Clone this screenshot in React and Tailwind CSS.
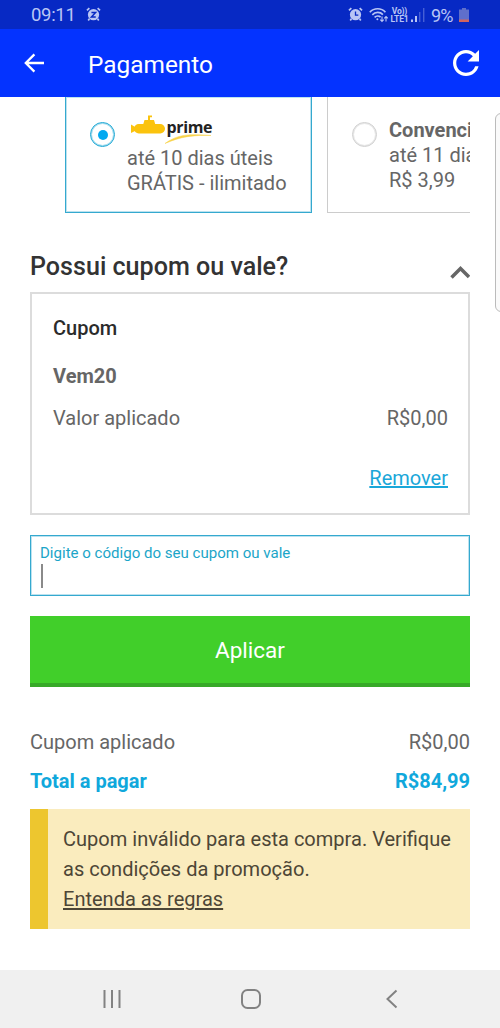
function AlarmBody() {
    return (
        <>
            <circle cx="8" cy="8.2" r="6" />
            <path d="M1 3.6 3.6 1.2M15 3.6 12.4 1.2M3.6 12.6 2.4 14.4M12.4 12.6 13.6 14.4" stroke="#b9c5f5" strokeWidth="1.8" fill="none" />
        </>
    );
}

function StatusBar() {
    return (
        <div className="flex h-[29px] shrink-0 items-center justify-between bg-[#0729c4] pl-[31px] pr-[31px] text-[#b9c5f5]">
            <div className="flex items-center">
                <span className="w-[45px] pt-[2px] text-[18.5px] leading-[29px] tracking-[-0.3px] whitespace-nowrap">09:11</span>
                <svg className="ml-[10px] h-[15px] w-[15px]" viewBox="0 0 16 16" fill="currentColor">
                    <AlarmBody />
                    <path d="M5.8 5.8h4.4L5.8 10.6h4.6" stroke="#0729c4" strokeWidth="1.6" fill="none" />
                </svg>
            </div>
            <div className="flex items-center">
                <svg className="h-[15px] w-[15px]" viewBox="0 0 16 16" fill="currentColor">
                    <AlarmBody />
                    <path d="M8 4.8v3.8h3" stroke="#0729c4" strokeWidth="1.4" fill="none" />
                </svg>
                <svg className="ml-[6px] h-[16px] w-[19px]" viewBox="0 0 19 16" fill="none" stroke="currentColor" strokeWidth="1.7">
                    <path d="M.8 5.2C5 .6 12.4.6 16.4 5.2M3.3 7.8c3-3.2 7.8-3.2 10.6-.2M5.6 10.4c1.8-1.8 4.4-1.8 6-.2" />
                    <circle cx="8.4" cy="12.3" r="1" fill="currentColor" stroke="none" />
                    <path d="M13 9.5v5M11.3 12.7l1.700 1.800 1.700-1.800M17 14.5v-5M15.300 11.300 17 9.500l1.700 1.800" strokeWidth="1.1" />
                </svg>
                <div className="ml-[2px] flex w-[19px] flex-col items-center text-[8.5px] leading-[8px] font-bold tracking-[-0.2px]">
                    <span>Vo))</span>
                    <span>LTE1</span>
                </div>
                <svg className="ml-[2px] h-[14px] w-[14px]" viewBox="0 0 14 14" fill="currentColor">
                    <path d="M0 11.500h2V14H0zM4 8h2v6H4z" />
                    <path d="M8 4h1.400v10H8zM12 0h1.400v14H12z" opacity=".35" />
                </svg>
                <span className="ml-[6px] w-[24px] pt-[2px] text-[18px] leading-[29px] tracking-[-0.8px] whitespace-nowrap">9%</span>
                <svg className="ml-[4px] h-[14px] w-[10px]" viewBox="0 0 10 14">
                    <path d="M3 0h4v1.500h3V12H0V1.500h3z" fill="#5f6fcb" />
                    <path d="M0 11.500h10V14H0z" fill="#d0655f" />
                </svg>
            </div>
        </div>
    );
}

function Header() {
    return (
        <header className="flex h-[68px] shrink-0 items-center bg-[#0433ff] pl-[24px] pr-[21px] text-white">
            <svg className="h-[20px] w-[20px]" viewBox="0 0 20 20" fill="none" stroke="currentColor" strokeWidth="2.3">
                <path d="M20 10H2.500M10.400 1.400 1.800 10l8.600 8.600" />
            </svg>
            <h1 className="ml-[44px] pt-[3px] text-[24.4px] leading-[30px]">Pagamento</h1>
            <svg className="ml-auto h-[26px] w-[26px]" viewBox="4 4 16 16" fill="currentColor">
                <path d="M17.650 6.350A7.958 7.958 0 0 0 12 4c-4.420 0-7.990 3.580-7.990 8s3.570 8 7.990 8c3.730 0 6.840-2.550 7.730-6h-2.080A5.990 5.990 0 0 1 12 18c-3.310 0-6-2.690-6-6s2.690-6 6-6c1.660 0 3.140.690 4.220 1.780L13 11h7V4l-2.350 2.350z" />
            </svg>
        </header>
    );
}

function PrimeLogo() {
    return (
        <svg className="ml-[4px] block h-[30px] w-[84px]" viewBox="0 0 84 30">
            <g fill="#fbc30d">
                <rect x="3" y="9" width="31" height="9.500" rx="4.750" />
                <path d="M0 9.500 5 12.500v3L0 18zM12 10l1.500-5h9.500l1.500 5zM17 6V.5h4v1.800h-2V6z" />
            </g>
            <path d="M34 28.500C46 19.500 58 18.500 80 20.500 62 20 50 21.500 34 28.500z" fill="#f8d34a" stroke="#f8d34a" strokeWidth=".5" />
            <text x="35.500" y="18" fontFamily="Open Sans, sans-serif" fontWeight="700" fontSize="16" textLength="46" fill="#222">prime</text>
        </svg>
    );
}

function Radio({ checked }) {
    return (
        <span className={checked
            ? 'mt-[25px] flex h-[25px] w-[25px] shrink-0 items-center justify-center rounded-full border border-[#1ba7d4] shadow-[inset_0_0_0_1px_#1ba7d466]'
            : 'mt-[25px] flex h-[25px] w-[25px] shrink-0 items-center justify-center rounded-full border border-[#cfcfcf] shadow-[inset_0_0_0_1px_#cfcfcf80]'}
        >
            {checked && <span className="h-[10px] w-[10px] rounded-full bg-[#03a9f0]" />}
        </span>
    );
}

function ShippingOptions() {
    return (
        <div className="ml-[65px] flex h-[116px] w-[405px] gap-[15px] overflow-hidden text-[20px] leading-[25px] text-[#666]">
            <div className="flex w-[247px] shrink-0 border-x border-b border-[#35a9cf] pl-[24px] shadow-[inset_0_0_0_1px_#35a9cf55]">
                <Radio checked />
                <div className="ml-[12px] pt-[18px] whitespace-nowrap">
                    <PrimeLogo />
                    <p className="mt-px">até 10 dias úteis</p>
                    <p>GRÁTIS - ilimitado</p>
                </div>
            </div>
            <div className="flex w-[247px] shrink-0 border-x border-b border-[#ccc] pl-[24px]">
                <Radio />
                <div className="ml-[12px] pt-[21px] whitespace-nowrap">
                    <p className="font-bold">Convencional</p>
                    <p>até 11 dias úteis</p>
                    <p>R$ 3,99</p>
                </div>
            </div>
        </div>
    );
}

function CouponBox() {
    return (
        <section className="mx-[30px] mt-[9px] h-[223px] border-2 border-[#dcdcdc] pt-[22px] pr-[20px] pl-[21px] text-[20px] leading-[24px] text-[#666]">
            <h3 className="font-medium text-[#2b2b2b]">Cupom</h3>
            <p className="mt-[24px] font-bold">Vem20</p>
            <div className="mt-[18px] flex justify-between">
                <span>Valor aplicado</span>
                <span>R$0,00</span>
            </div>
            <div className="mt-[36px] text-right">
                <a className="text-[#1ba7d9] underline">Remover</a>
            </div>
        </section>
    );
}

function NavBar() {
    return (
        <nav className="flex h-[58px] shrink-0 items-center bg-[#f0f0f0] pl-[103px] text-[#828282]">
            <svg className="h-[20px] w-[18px]" viewBox="0 0 18 20" stroke="currentColor" strokeWidth="2">
                <path d="M1.500 1v18M9 1v18M16.500 1v18" />
            </svg>
            <svg className="ml-[120px] h-[20px] w-[20px]" viewBox="0 0 20 20" fill="none" stroke="currentColor" strokeWidth="2">
                <rect x="1" y="1" width="18" height="18" rx="5.500" />
            </svg>
            <svg className="ml-[125px] h-[20px] w-[12px]" viewBox="0 0 12 20" fill="none" stroke="currentColor" strokeWidth="2">
                <path d="M10.500 1.500 1.500 10l9 8.500" />
            </svg>
        </nav>
    );
}

export default function App() {
    return (
        <div className="flex h-[1028px] w-[500px] flex-col overflow-hidden bg-white font-[Roboto,sans-serif]">
            <StatusBar />
            <Header />

            <main className="relative flex grow flex-col overflow-hidden">
                <ShippingOptions />

                {/* Edge panel handle */}
                <div className="absolute top-[16px] left-[495px] h-[199px] w-[12px] rounded-[6px] border border-[#bbb] bg-[#fafafa]" />

                {/* Coupon */}
                <div className="mx-[30px] mt-[37px] flex h-[33px] justify-between">
                    <h2 className="text-[25.1px] leading-[33px] font-medium text-[#333]">Possui cupom ou vale?</h2>
                    <svg className="mt-[16px] h-[13px] w-[20px]" viewBox="0 0 20 13" fill="none" stroke="#666" strokeWidth="3.500">
                        <path d="M1.500 11.500 10.500 2.500l8.500 8.500" />
                    </svg>
                </div>
                <CouponBox />

                <div className="mx-[30px] mt-[20px] h-[61px] border border-[#35a9cf] px-[9px] pt-[8px] text-[15.05px] leading-[18px] text-[#1ba5c8] shadow-[inset_0_0_0_1px_#35a9cf55]">
                    <label>Digite o código do seu cupom ou vale</label>
                    <div className="ml-[1px] mt-[2px] h-[24px] w-[2px] bg-[#8a8a8a]" />
                </div>

                <button className="mx-[30px] mt-[20px] h-[71px] border-b-4 border-[#37a928] bg-[#41cf2a] pt-[3px] text-[22.5px] text-white">
                    Aplicar
                </button>

                {/* Totals */}
                <div className="mx-[30px] mt-[43px] flex justify-between text-[20px] leading-[24px] text-[#666]">
                    <span>Cupom aplicado</span>
                    <span>R$0,00</span>
                </div>
                <div className="mx-[30px] mt-[15px] flex justify-between text-[20px] leading-[24px] font-bold text-[#10a8dc]">
                    <span>Total a pagar</span>
                    <span>R$84,99</span>
                </div>

                {/* Alert */}
                <div className="mx-[30px] mt-[16px] h-[120px] border-l-[18px] border-[#edc62f] bg-[#faecbe] pt-[15px] pl-[15px] text-[20.05px] leading-[30px] whitespace-nowrap text-[#4d4636]">
                    <p>Cupom inválido para esta compra. Verifique</p>
                    <p>as condições da promoção.</p>
                    <a className="underline">Entenda as regras</a>
                </div>
            </main>

            <NavBar />
        </div>
    );
}
